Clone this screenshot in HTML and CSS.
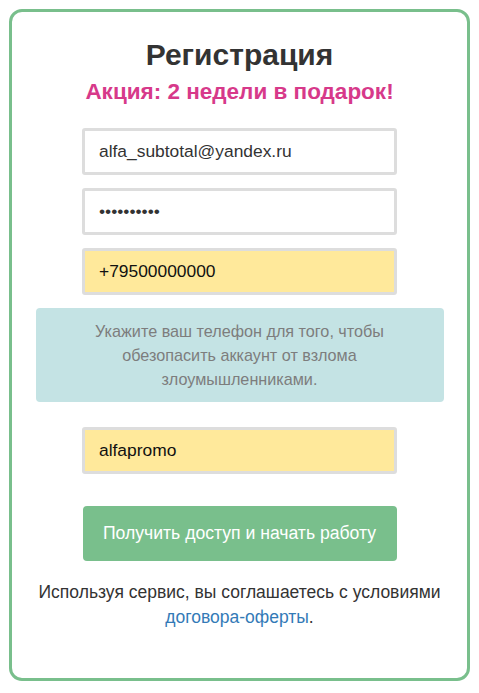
FILE: index.html
```html
<!DOCTYPE html>
<html lang="ru">
<head>
  <meta charset="UTF-8" />
  <meta name="viewport" content="width=device-width, initial-scale=1.0"/>
  <title>Регистрация</title>
  <link rel="stylesheet" href="styles.css">
</head>

<body>
  <div class="card">
    <h1 class="title">Регистрация</h1>
    <p class="promo">Акция: 2 недели в подарок!</p>

    <form class="form" onsubmit="return false">
      <input class="field" type="email" value="alfa_subtotal@yandex.ru">
      <input class="field" type="password" value="0123456789">
      <input class="field filled" type="tel" value="+79500000000">

      <div class="hint">
        Укажите ваш телефон для того, чтобы<br>
        обезопасить аккаунт от взлома<br>
        злоумышленниками.
      </div>

      <input class="field filled promo-code" type="text" value="alfapromo">

      <button class="submit" type="submit">Получить доступ и начать работу</button>
    </form>

    <p class="terms">
      Используя сервис, вы соглашаетесь с условиями<br>
      <a href="#">договора-оферты</a>.
    </p>
  </div>
</body>
</html>
```

FILE: styles.css
```css
html, body {
  margin: 0;
  background: #fff;
}

body {
  font-family: "Liberation Sans", Arial, sans-serif;
  color: #333;
  padding: 9px;
}

.card {
  width: 461px;
  height: 672px;
  box-sizing: border-box;
  border: 3px solid #79bf8c;
  border-radius: 13px;
  padding: 26px 0 0;
  text-align: center;
}

.title {
  margin: 0;
  font-size: 30px;
  line-height: 34px;
  font-weight: bold;
  color: #333;
}

.promo {
  margin: 7px 0 0;
  font-size: 22.5px;
  line-height: 26px;
  font-weight: bold;
  color: #d7398a;
}

.form {
  display: flex;
  flex-direction: column;
  align-items: center;
  margin-top: 23px;
}

.field {
  width: 315px;
  height: 47px;
  box-sizing: border-box;
  border: 3px solid #ddd;
  border-radius: 3px;
  padding: 0 14px;
  margin-bottom: 13px;
  font-family: inherit;
  font-size: 17.4px;
  color: #333;
  background: #fff;
  outline: none;
}

.field.filled {
  background: #ffe99b;
  color: #111;
}

.hint {
  width: 408px;
  box-sizing: border-box;
  background: #c4e3e4;
  border-radius: 4px;
  padding: 11px 20px;
  font-size: 16.2px;
  line-height: 24px;
  color: #7d7d7d;
  margin-bottom: 25px;
}

.promo-code {
  margin-bottom: 32px;
}

.submit {
  width: 314px;
  height: 55px;
  border: none;
  border-radius: 4px;
  background: #79bf8c;
  color: #fff;
  font-family: inherit;
  font-size: 17.6px;
  cursor: pointer;
}

.terms {
  margin: 19px 0 0;
  font-size: 17.5px;
  line-height: 25px;
  color: #333;
}

.terms a {
  color: #337ab7;
  text-decoration: none;
}
```
